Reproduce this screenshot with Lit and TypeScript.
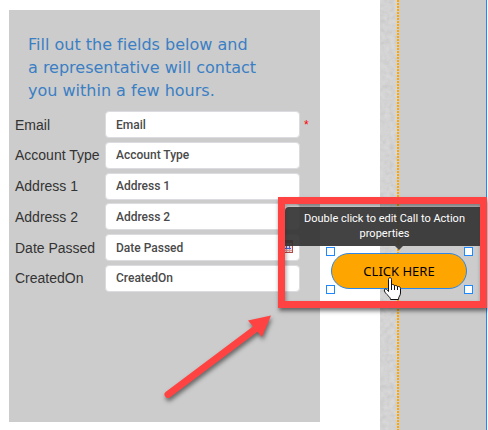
import { LitElement, html, css } from "lit";
import { customElement, property } from "lit/decorators.js";

@customElement("lead-form")
class LeadForm extends LitElement {
  static styles = css`
    :host { display: block; }
    form {
      box-sizing: border-box;
      min-height: 412px;
      padding: 23px 6px;
      background: #ccc;
    }
    h1 {
      margin: 0;
      padding: 0 13px;
      max-width: 250px;
      font: 400 16px/23px "DejaVu Sans", Verdana, sans-serif;
      font-variant-ligatures: none;
      color: #3a7fc4;
    }
    .rows {
      display: flex;
      flex-direction: column;
      justify-content: space-between;
      height: 181px;
      margin-top: 9px;
    }
    .row { display: flex; align-items: center; height: 27px; }
    label {
      width: 90px;
      white-space: nowrap;
      font: 14px/20px "Liberation Sans", Arial, sans-serif;
      color: #333;
    }
    .field { position: relative; width: 195px; height: 27px; }
    input {
      box-sizing: border-box;
      width: 100%;
      height: 100%;
      margin: 0;
      padding: 0 10px;
      border: 1px solid #dcdce0;
      border-radius: 4px;
      background: #fff;
      font: 500 12px/16px Roboto, sans-serif;
      color: #555;
      outline: none;
    }
    input::placeholder { color: #4a4a4a; opacity: 1; }
    .required {
      padding-left: 4px;
      font: 12px/16px "Liberation Sans", Arial, sans-serif;
      color: #f00;
    }
    .calendar { position: absolute; right: 7px; top: 6px; }
  `;

  fields = [
    { id: "email", name: "Email", required: true },
    { id: "account", name: "Account Type" },
    { id: "address1", name: "Address 1" },
    { id: "address2", name: "Address 2" },
    { id: "date", name: "Date Passed", date: true },
    { id: "created", name: "CreatedOn" },
  ];

  render() {
    return html`
      <form>
        <h1>Fill out the fields below and<br />a representative will contact<br />you within a few hours.</h1>
        <div class="rows">
          ${this.fields.map(
            (f) => html`
              <div class="row">
                <label for=${f.id}>${f.name}</label>
                <div class="field">
                  <input id=${f.id} type="text" placeholder=${f.name} />
                  ${f.date
                    ? html`<svg class="calendar" width="10" height="13" viewBox="0 0 10 13" aria-hidden="true">
                        <path d="M0 0h10v13H0z" fill="#b44b4b" />
                        <path d="M1 3h8v9H1z" fill="#f3dada" />
                        <path d="M1 5.500h8M1 10.500h8M3.500 3v9M6.500 3v9" stroke="#d99a9a" />
                        <path d="M3.500 6v3M6.500 6v3M2 8.500h6" fill="none" stroke="#4466cc" />
                      </svg>`
                    : ""}
                </div>
                ${f.required ? html`<span class="required">*</span>` : ""}
              </div>
            `
          )}
        </div>
      </form>
    `;
  }
}

@customElement("page-strip")
class PageStrip extends LitElement {
  static styles = css`
    :host { display: flex; background: #ccc; border-right: 1px solid #1e88ff; }
    .texture { width: 17px; height: 100%; }
    .guide {
      width: 2px;
      background: repeating-linear-gradient(#ffa500 0 2px, #ddd0b0 2px 3px);
    }
  `;

  render() {
    return html`
      <svg class="texture" aria-hidden="true">
        <filter id="plaster" x="0" y="0" width="100%" height="100%">
          <feTurbulence type="fractalNoise" baseFrequency="0.2" numOctaves="3" seed="4" />
          <feColorMatrix
            values="0.12 0 0 0 0.74
                    0.12 0 0 0 0.74
                    0.12 0 0 0 0.74
                    0 0 0 0 1"
            color-interpolation-filters="sRGB"
          />
        </filter>
        <rect width="100%" height="100%" filter="url(#plaster)" />
      </svg>
      <div class="guide"></div>
    `;
  }
}

@customElement("call-to-action")
class CallToAction extends LitElement {
  @property() text = "CLICK HERE";

  static styles = css`
    :host {
      display: block;
      box-sizing: border-box;
      width: 209px;
      height: 111px;
      border: 7px solid #ff4343;
      box-shadow:
        1px 3px 4px rgba(0, 0, 0, 0.5),
        inset 1px 3px 4px rgba(0, 0, 0, 0.4);
    }
    .tip {
      position: relative;
      box-sizing: border-box;
      height: 39px;
      margin-top: 3px;
      padding: 4px 0 0 4px;
      border-radius: 4px 0 0 0;
      background: rgba(51, 51, 51, 0.92);
      color: #fff;
      text-align: center;
      font: 400 11px/15px Roboto, sans-serif;
    }
    .tip::after {
      content: "";
      position: absolute;
      left: 110px;
      top: 39px;
      border: 4px solid transparent;
      border-top-color: #444;
      border-bottom: 0;
    }
    .selection {
      position: relative;
      width: 147px;
      height: 47px;
      margin: 1px 0 0 41px;
      padding: 6px 6px 5px 5px;
      box-sizing: border-box;
    }
    button {
      display: block;
      width: 100%;
      height: 36px;
      padding: 0;
      border: 1px solid #2d87e8;
      border-radius: 18px;
      background: #ffa500;
      color: #000;
      font: 13px/18px "Noto Sans", Tahoma, sans-serif;
      cursor: pointer;
    }
    .handle {
      position: absolute;
      box-sizing: border-box;
      width: 9px;
      height: 9px;
      border: 1px solid #1e88ff;
      background: #fff;
    }
    .nw { left: 0; top: 0; }
    .ne { right: 0; top: 0; }
    .sw { left: 0; bottom: 0; }
    .se { right: 0; bottom: 0; }
    .hand { position: absolute; left: 57px; top: 30px; }
  `;

  render() {
    return html`
      <div class="tip" role="tooltip">Double click to edit Call to Action<br />properties</div>
      <div class="selection">
        <button type="button">${this.text}</button>
        <span class="handle nw"></span><span class="handle ne"></span>
        <span class="handle sw"></span><span class="handle se"></span>
        <svg class="hand" width="19" height="24" viewBox="0 0 19 24" aria-hidden="true">
          <path
            d="M5.500 14.500V2.500C5.500 0 8.500 0 8.500 2.500V8c1-1 3-.5 3 1 1-1 3-.5 3 1 1-1 3-.5 3 1.500V16c0 3-2 3-2 6.500h-8c0-3-5-5-6-8.500-1-2.500 2-3 4 .5z"
            fill="#fff"
            stroke="#111"
            stroke-linejoin="round"
          />
          <path d="M8.500 8v5M11.500 9v4M14.500 10v3" stroke="#111" />
        </svg>
      </div>
    `;
  }
}

@customElement("app-root")
class AppRoot extends LitElement {
  static styles = css`
    :host { display: block; background: #fff; }
    main {
      position: relative;
      display: flex;
      min-height: 100vh;
      padding-right: 1px;
      box-sizing: border-box;
      overflow: hidden;
    }
    lead-form { flex: 0 0 311px; margin: 10px 60px 8px 9px; }
    page-strip { flex: 1; }
    call-to-action { position: absolute; left: 278px; top: 197px; }
    .arrow {
      position: absolute;
      left: 160px;
      top: 310px;
      filter: drop-shadow(1px 3px 2px rgba(0, 0, 0, 0.5));
    }
  `;

  render() {
    return html`
      <main>
        <lead-form></lead-form>
        <page-strip></page-strip>
        <call-to-action></call-to-action>
        <svg class="arrow" width="120" height="100" viewBox="0 0 120 100" aria-hidden="true">
          <path d="M8 84.500L98 17" stroke="#ff4343" stroke-width="7" stroke-linecap="round" />
          <path d="M111 5.500L88 10.500 102 27z" fill="#ff4343" />
        </svg>
      </main>
    `;
  }
}
